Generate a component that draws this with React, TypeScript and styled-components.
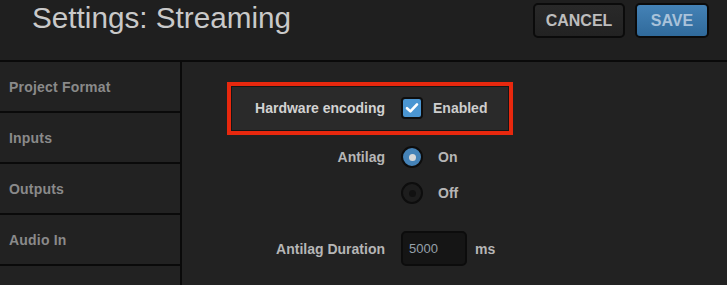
import React from "react";
import styled, { createGlobalStyle } from "styled-components";

const Global = createGlobalStyle`
  html, body { margin: 0; padding: 0; background: #212121; overflow: hidden; }
  * { box-sizing: border-box; }
`;

const Page = styled.div`
  width: 727px;
  height: 285px;
  overflow: hidden;
  display: flex;
  flex-direction: column;
  font-family: "Liberation Sans", Arial, sans-serif;
  background: #212121;
`;

const Header = styled.header`
  height: 62px;
  flex: none;
  display: flex;
  align-items: flex-start;
  justify-content: space-between;
  padding: 3px 18px 0 32px;
  background: #1f1f1f;
  border-bottom: 2px solid #0a0a0a;
`;

const Title = styled.h1`
  margin: 0;
  font-size: 29.7px;
  line-height: 30px;
  font-weight: 400;
  color: #c9c9c9;
`;

const Actions = styled.div`
  display: flex;
  gap: 10px;
`;

const Button = styled.button<{ $primary?: boolean; $w: number }>`
  width: ${(p) => p.$w}px;
  height: 35px;
  border: 2px solid #0b0b0b;
  border-radius: 5px;
  font-family: inherit;
  font-size: 16px;
  font-weight: 700;
  padding: 0;
  color: ${(p) => (p.$primary ? "#a9c2da" : "#bdbdbd")};
  background: ${(p) =>
    p.$primary
      ? "linear-gradient(#4482b6, #306a9b)"
      : "linear-gradient(#292929, #222222)"};
`;

const Body = styled.div`
  flex: 1;
  display: flex;
  min-height: 0;
  overflow: hidden;
`;

const Sidebar = styled.nav`
  width: 182px;
  flex: none;
  border-right: 2px solid #0a0a0a;
  display: flex;
  flex-direction: column;
  overflow: hidden;
`;

const NavItem = styled.div`
  height: 51px;
  flex: none;
  border-bottom: 2px solid #0a0a0a;
  background: #222222;
  display: flex;
  align-items: center;
  padding-left: 9px;
  font-size: 14px;
  font-weight: 700;
  letter-spacing: 0.2px;
  color: #8a8a8a;
`;

const Content = styled.main`
  flex: 1;
  background: #222222;
  padding: 20px 0 0 45px;
  display: flex;
  flex-direction: column;
`;

const Row = styled.div<{ $highlight?: boolean; $top?: number; $align?: string }>`
  width: 286px;
  margin-top: ${(p) => p.$top ?? 0}px;
  border: 4px solid ${(p) => (p.$highlight ? "#e8280e" : "transparent")};
  background: ${(p) => (p.$highlight ? "#2a2a2a" : "transparent")};
  box-shadow: ${(p) => (p.$highlight ? "inset 0 0 0 1px #161616" : "none")};
  padding: ${(p) => (p.$highlight ? "11px 0 12px" : "0")};
  display: grid;
  grid-template-columns: 154px auto;
  column-gap: 16px;
  align-items: ${(p) => p.$align ?? "center"};
`;

const Label = styled.label<{ $bright?: boolean }>`
  text-align: right;
  font-size: 14px;
  font-weight: 700;
  line-height: 22px;
  color: ${(p) => (p.$bright ? "#d2d2d2" : "#b6b6b6")};
  white-space: nowrap;
`;

const Control = styled.div<{ $gap: number }>`
  display: flex;
  align-items: center;
  gap: ${(p) => p.$gap}px;
`;

const RadioGroup = styled.div`
  display: flex;
  flex-direction: column;
  gap: 14px;
`;

const CheckBox = styled.span`
  width: 22px;
  height: 22px;
  border: 2px solid #0e0e0e;
  border-radius: 4px;
  background: #4b96d2;
  display: flex;
  align-items: center;
  justify-content: center;
`;

const Radio = styled.span<{ $on?: boolean }>`
  width: 22px;
  height: 22px;
  border-radius: 50%;
  border: 2px solid #0d0d0d;
  background: ${(p) => (p.$on ? "#4583b8" : "#1d1d1d")};
  display: flex;
  align-items: center;
  justify-content: center;
  &::after {
    content: "";
    width: 7px;
    height: 7px;
    border-radius: 50%;
    background: ${(p) => (p.$on ? "#d9d9d9" : "#111111")};
  }
`;

const OptionText = styled.span<{ $bright?: boolean }>`
  font-size: 14px;
  font-weight: 700;
  color: ${(p) => (p.$bright ? "#cdcdcd" : "#b6b6b6")};
`;

const NumberBox = styled.div`
  width: 66px;
  height: 35px;
  border: 2px solid #0c0c0c;
  border-radius: 5px;
  background: #151515;
  display: flex;
  align-items: center;
  padding-left: 6px;
  font-size: 13px;
  color: #96a0aa;
`;

export default function App() {
  return (
    <>
      <Global />
      <Page>
        <Header>
          <Title>Settings: Streaming</Title>
          <Actions>
            <Button $w={92}>CANCEL</Button>
            <Button $w={74} $primary>
              SAVE
            </Button>
          </Actions>
        </Header>
        <Body>
          <Sidebar>
            <NavItem>Project Format</NavItem>
            <NavItem>Inputs</NavItem>
            <NavItem>Outputs</NavItem>
            <NavItem>Audio In</NavItem>
            <NavItem />
          </Sidebar>
          <Content>
            <Row $highlight>
              <Label $bright>Hardware encoding</Label>
              <Control $gap={10}>
                <CheckBox>
                  <svg width="16" height="16" viewBox="0 0 16 16">
                    <path
                      d="M3 8.2 L6.4 11.4 L13 4.4"
                      fill="none"
                      stroke="#ffffff"
                      strokeWidth="2.6"
                      strokeLinecap="round"
                      strokeLinejoin="round"
                    />
                  </svg>
                </CheckBox>
                <OptionText $bright>Enabled</OptionText>
              </Control>
            </Row>
            <Row $top={7} $align="start">
              <Label>Antilag</Label>
              <RadioGroup>
                <Control $gap={15}>
                  <Radio $on />
                  <OptionText>On</OptionText>
                </Control>
                <Control $gap={15}>
                  <Radio />
                  <OptionText>Off</OptionText>
                </Control>
              </RadioGroup>
            </Row>
            <Row $top={19}>
              <Label>Antilag Duration</Label>
              <Control $gap={8}>
                <NumberBox>5000</NumberBox>
                <OptionText>ms</OptionText>
              </Control>
            </Row>
          </Content>
        </Body>
      </Page>
    </>
  );
}
